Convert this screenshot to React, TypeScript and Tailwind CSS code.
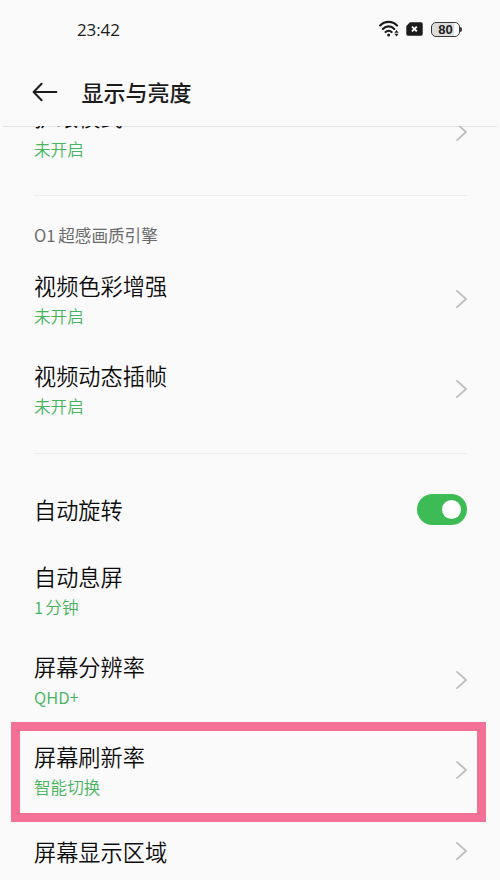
import React from "react";
import clsx from "clsx";

interface SettingRowProps {
  title: string;
  value?: string;
  scrolled?: boolean;
}

const Chevron = () => {
  return (
    <svg
      className="h-5 w-3 shrink-0"
      viewBox="0 0 12 20"
      fill="none"
      stroke="#bdbdbd"
      strokeWidth="1.7"
      strokeLinecap="round"
      strokeLinejoin="round"
    >
      <path d="M2 1.8 L11 10 L2 18.2" />
    </svg>
  );
};

const RowText = ({ title, value, scrolled }: SettingRowProps) => {
  return (
    <div className="flex flex-col">
      <p
        className={clsx(
          "text-[22.2px] font-[350] text-[#0c0c0c]",
          scrolled ? "pb-1 leading-7" : "leading-8",
        )}
      >
        {title}
      </p>
      {value && (
        <p className="mt-[2px] text-[16.6px] leading-[26px] font-[350] text-[#46b45c] [word-spacing:-1.5px]">
          {value}
        </p>
      )}
    </div>
  );
};

const SettingRow = ({ title, value, scrolled }: SettingRowProps) => {
  return (
    <div className="flex h-[90px] shrink-0 items-center justify-between">
      <RowText title={title} value={value} scrolled={scrolled} />
      <Chevron />
    </div>
  );
};

const Divider = () => {
  return <div className="h-px shrink-0 bg-[#ededed]" />;
};

const StatusBar = () => {
  return (
    <div className="flex h-[58px] items-center justify-between pr-[38px] pl-[77px]">
      <p className="pt-px font-['Open_Sans',sans-serif] text-[17px] leading-6 font-medium tracking-[-0.1px] text-[#1c1c1c]">
        23:42
      </p>
      <div className="flex items-center">
        <svg className="h-[18px] w-[21px]" viewBox="0 0 21 18" fill="none">
          <g stroke="#1c1c1c" strokeWidth="2.2" strokeLinecap="round">
            <path d="M1.2 5.4 C5.8 0.6 13.4 0.6 18 5.4" />
            <path d="M3.9 8.9 C7 5.6 12.2 5.6 15.3 8.9" />
            <path d="M6.6 12 C8.3 10.3 10.9 10.3 12.6 12" />
          </g>
          <circle cx="9.6" cy="15" r="1.5" fill="#1c1c1c" />
          <path d="M15.4 12.7 L17.5 10 L19.6 12.7Z" fill="#1c1c1c" />
          <path d="M15.4 13.8 L17.5 16.5 L19.6 13.8Z" fill="#1c1c1c" />
        </svg>
        <svg className="ml-[6px] h-[14px] w-[17px]" viewBox="0 0 17 14">
          <path
            d="M4 0.3 H15 Q16.7 0.3 16.7 2 V12 Q16.7 13.7 15 13.7 H2 Q0.3 13.7 0.3 12 V4Z"
            fill="#1c1c1c"
          />
          <path
            d="M6 4.6 L10.8 9.4 M10.8 4.6 L6 9.4"
            stroke="#fff"
            strokeWidth="2"
          />
        </svg>
        <div className="ml-2 flex items-center">
          <div className="flex h-[15px] w-[29px] items-center justify-center rounded-[5px] border border-[#3a3a3a] bg-linear-to-r from-[#dcdcdc] from-80% to-[#fafafa] to-80% pt-px font-['Liberation_Sans',sans-serif] text-[13px] leading-none font-bold text-[#1c1c1c]">
            80
          </div>
          <div className="h-[5px] w-[2px] rounded-r bg-[#3a3a3a]" />
        </div>
      </div>
    </div>
  );
};

const Header = () => {
  return (
    <div className="flex h-[68px] items-center pl-8">
      <svg
        className="h-5 w-[26px]"
        viewBox="0 0 26 20"
        fill="none"
        stroke="#1c1c1c"
        strokeWidth="2"
        strokeLinecap="round"
        strokeLinejoin="round"
      >
        <path d="M9.6 1.8 L1.6 10 L9.6 18.2 M1.6 10 H24.4" />
      </svg>
      <h1 className="mb-[2px] ml-[23.5px] text-[22px] leading-8 font-medium text-[#1c1c1c]">
        显示与亮度
      </h1>
    </div>
  );
};

const App = () => {
  return (
    <div className="flex h-[880px] w-[500px] flex-col overflow-hidden bg-[#fafafa] font-['Noto_Sans_CJK_SC',sans-serif]">
      <StatusBar />
      <Header />
      <div className="mx-[3px] -mb-px h-px shrink-0 bg-[#e4e4e4]" />
      <div className="relative flex h-[754px] flex-col overflow-hidden pr-[33px] pl-[34px]">
        <div className="-mt-[39px] shrink-0">
          <SettingRow title="护眼模式" value="未开启" scrolled />
        </div>
        <div className="mt-[18px] shrink-0">
          <Divider />
        </div>
        <p className="flex h-[58px] shrink-0 items-end pb-[6px] text-[16.6px] leading-[26px] text-[#6b6b6b] [word-spacing:-1px]">
          O1 超感画质引擎
        </p>
        <SettingRow title="视频色彩增强" value="未开启" />
        <SettingRow title="视频动态插帧" value="未开启" />
        <div className="my-[19px] shrink-0">
          <Divider />
        </div>
        <div className="flex h-[72px] shrink-0 items-center justify-between">
          <RowText title="自动旋转" />
          <div className="flex h-[31px] w-[50px] items-center justify-end rounded-full bg-[#3dbc56] pr-[6px]">
            <div className="h-[19px] w-[19px] rounded-full bg-white" />
          </div>
        </div>
        <div className="flex h-[90px] shrink-0 items-center">
          <RowText title="自动息屏" value="1 分钟" />
        </div>
        <SettingRow title="屏幕分辨率" value="QHD+" />
        <div className="relative shrink-0">
          <SettingRow title="屏幕刷新率" value="智能切换" />
          <div className="absolute -top-[3px] -right-[19px] -left-[23px] h-[100px] border-[9px] border-[#f47095]" />
        </div>
        <div className="flex h-[72px] shrink-0 items-center justify-between">
          <RowText title="屏幕显示区域" />
          <Chevron />
        </div>
      </div>
    </div>
  );
};

export default App;
